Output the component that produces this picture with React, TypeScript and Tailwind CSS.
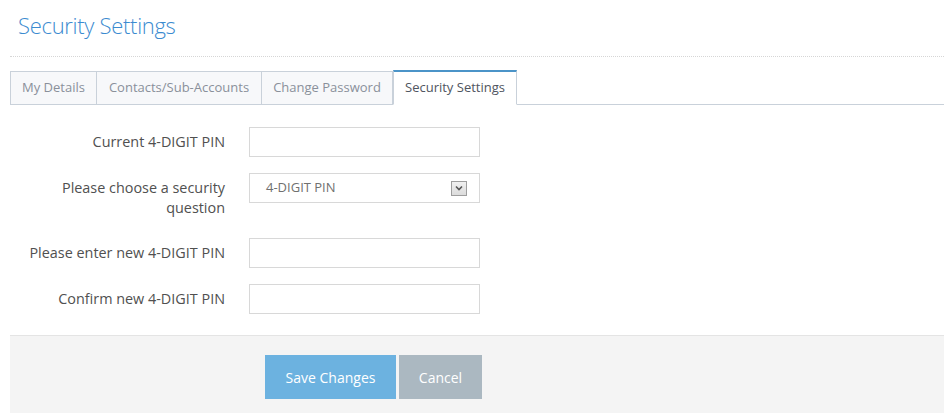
import React from "react";

const font = { fontFamily: '"Open Sans", "Noto Sans", sans-serif' };

export default function App() {
  const tabs = [
    { label: "My Details", w: "w-[87px]" },
    { label: "Contacts/Sub-Accounts", w: "w-[165px]" },
    { label: "Change Password", w: "w-[131px]" },
  ];
  return (
    <div className="w-[948px] h-[413px] bg-white overflow-hidden" style={font}>
      <div className="ml-[10px] w-[934px]">
        <div className="h-[57px] border-b border-dotted border-[#d6d6d6] pl-[8px] pt-[8px]">
          <h1 className="text-[22px] leading-[34px] font-light text-[#3b8bd0] tracking-[-0.3px]">
            Security Settings
          </h1>
        </div>
        <div className="mt-[14px] flex items-end h-[34px] border-b border-[#c9d1da]">
          {tabs.map((t, i) => (
            <div
              key={t.label}
              className={`${t.w} h-[34px] -mb-px flex items-center justify-center bg-[#f7f8fa] border border-[#c9d1da] ${i > 0 ? "border-l-0" : ""} text-[13px] text-[#8a909a]`}
            >
              {t.label}
            </div>
          ))}
          <div className="w-[124px] h-[35px] -mb-px flex items-center justify-center bg-white border-x border-[#c9d1da] border-t-2 border-t-[#4b94c8] border-b border-b-white text-[13px] text-[#4f5560]">
            Security Settings
          </div>
        </div>

        <div className="pt-[22px]">
          <div className="flex items-center mb-[16px]">
            <div className="w-[215px] text-right text-[14.4px] text-[#505050]">Current 4-DIGIT PIN</div>
            <input className="ml-[24px] w-[231px] h-[30px] border border-[#d8d8d8] outline-none" />
          </div>
          <div className="flex items-start mb-[20px]">
            <div className="w-[215px] text-right text-[14.4px] leading-[20px] text-[#505050] pt-[5px]">
              Please choose a security
              <br />
              question
            </div>
            <div className="ml-[24px] w-[231px] h-[30px] border border-[#d8d8d8] flex items-center justify-between pl-[16px] pr-[12px]">
              <span className="text-[13px] text-[#707070]">4-DIGIT PIN</span>
              <div className="w-[16px] h-[15px] border border-[#9e9e9e] bg-gradient-to-b from-[#f0f0f0] to-[#dcdcdc] flex items-center justify-center">
                <svg width="8" height="6" viewBox="0 0 8 6">
                  <path d="M1 1.5 L4 4.5 L7 1.5" stroke="#555" strokeWidth="1.6" fill="none" />
                </svg>
              </div>
            </div>
          </div>
          <div className="flex items-center mb-[16px]">
            <div className="w-[215px] text-right text-[14.4px] text-[#505050]">Please enter new 4-DIGIT PIN</div>
            <input className="ml-[24px] w-[231px] h-[30px] border border-[#d8d8d8] outline-none" />
          </div>
          <div className="flex items-center mb-[21px]">
            <div className="w-[215px] text-right text-[14.4px] text-[#505050]">Confirm new 4-DIGIT PIN</div>
            <input className="ml-[24px] w-[231px] h-[30px] border border-[#d8d8d8] outline-none" />
          </div>
        </div>

        <div className="h-[90px] bg-[#f4f4f4] border-t border-[#e4e4e4] pt-[19px] pl-[255px] flex items-start gap-[3px]">
          <button className="w-[131px] h-[44px] bg-[#6cb2e0] text-white text-[14px]">Save Changes</button>
          <button className="w-[83px] h-[44px] bg-[#abb8c1] text-white text-[14px]">Cancel</button>
        </div>
      </div>
    </div>
  );
}
